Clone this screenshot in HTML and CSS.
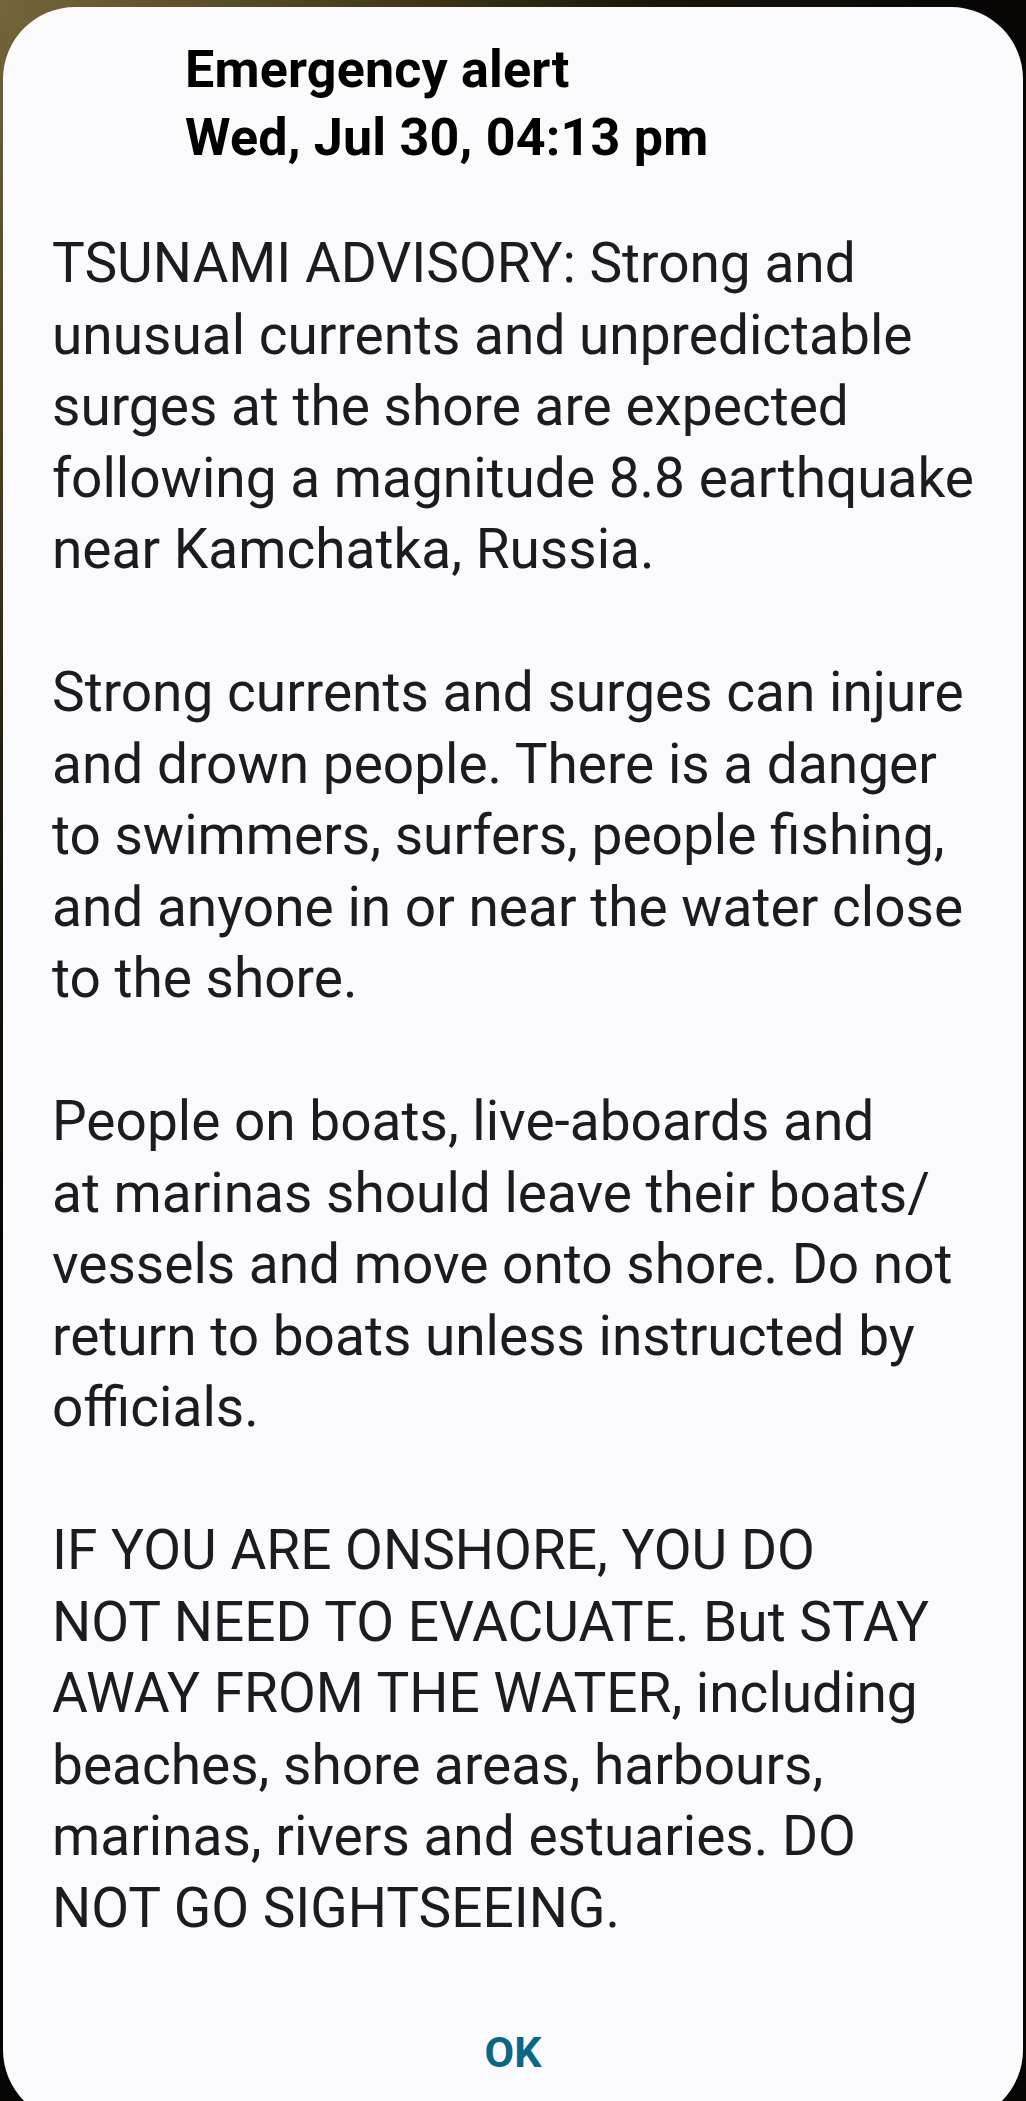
FILE: index.html
```html
<!DOCTYPE html>
<html lang="en">
<head>
<meta charset="utf-8">
<title>Emergency alert</title>
<link rel="stylesheet" href="styles.css">
</head>
<body>
<div class="screen">
  <div class="dialog">
    <header class="head">
      <div class="head-title">Emergency alert</div>
      <div class="head-date">Wed, Jul 30, 04:13 pm</div>
    </header>
    <div class="msg">
      <p class="para">TSUNAMI ADVISORY: Strong and<br>unusual currents and unpredictable<br>surges at the shore are expected<br>following a magnitude 8.8 earthquake<br>near Kamchatka, Russia.</p>
      <p class="para">Strong currents and surges can injure<br>and drown people. There is a danger<br>to swimmers, surfers, people fishing,<br>and anyone in or near the water close<br>to the shore.</p>
      <p class="para">People on boats, live-aboards and<br>at marinas should leave their boats/<br>vessels and move onto shore. Do not<br>return to boats unless instructed by<br>officials.</p>
      <p class="para">IF YOU ARE ONSHORE, YOU DO<br>NOT NEED TO EVACUATE. But STAY<br>AWAY FROM THE WATER, including<br>beaches, shore areas, harbours,<br>marinas, rivers and estuaries. DO<br>NOT GO SIGHTSEEING.</p>
    </div>
    <div class="actions">
      <button class="ok-btn" type="button">OK</button>
    </div>
  </div>
</div>
</body>
</html>
```

FILE: styles.css
```css
html, body {
  margin: 0;
  padding: 0;
  height: 100%;
  overflow: hidden;
}

body {
  background: radial-gradient(ellipse 1000px 1300px at 0 0, #74653a 0%, #4a3f1c 35%, #1a160a 65%, #060504 100%);
  font-family: Roboto, "Liberation Sans", sans-serif;
}

.screen {
  padding: 7px 3px 0 3px;
}

.dialog {
  background: #fbfbfd;
  border-radius: 72px;
  height: 2115px;
  box-sizing: border-box;
  padding: 29px 0 0 49px;
  display: flex;
  flex-direction: column;
}

.head {
  padding-left: 133px;
  color: #000;
  font-weight: 700;
  font-size: 52px;
  line-height: 68px;
  letter-spacing: 0.2px;
}

.msg {
  margin-top: 56px;
  color: #1b1c1f;
  font-size: 55px;
  line-height: 71.5px;
  white-space: nowrap;
  letter-spacing: 0;
}

.para {
  margin: 0 0 71.5px 0;
}

.para:last-child {
  margin-bottom: 0;
}

.actions {
  margin-top: 80px;
  margin-left: -49px;
  display: flex;
  justify-content: center;
}

.ok-btn {
  border: 0;
  background: transparent;
  padding: 0;
  font-family: Roboto, "Liberation Sans", sans-serif;
  font-weight: 700;
  font-size: 43px;
  line-height: 56px;
  color: #0c6686;
}
```
